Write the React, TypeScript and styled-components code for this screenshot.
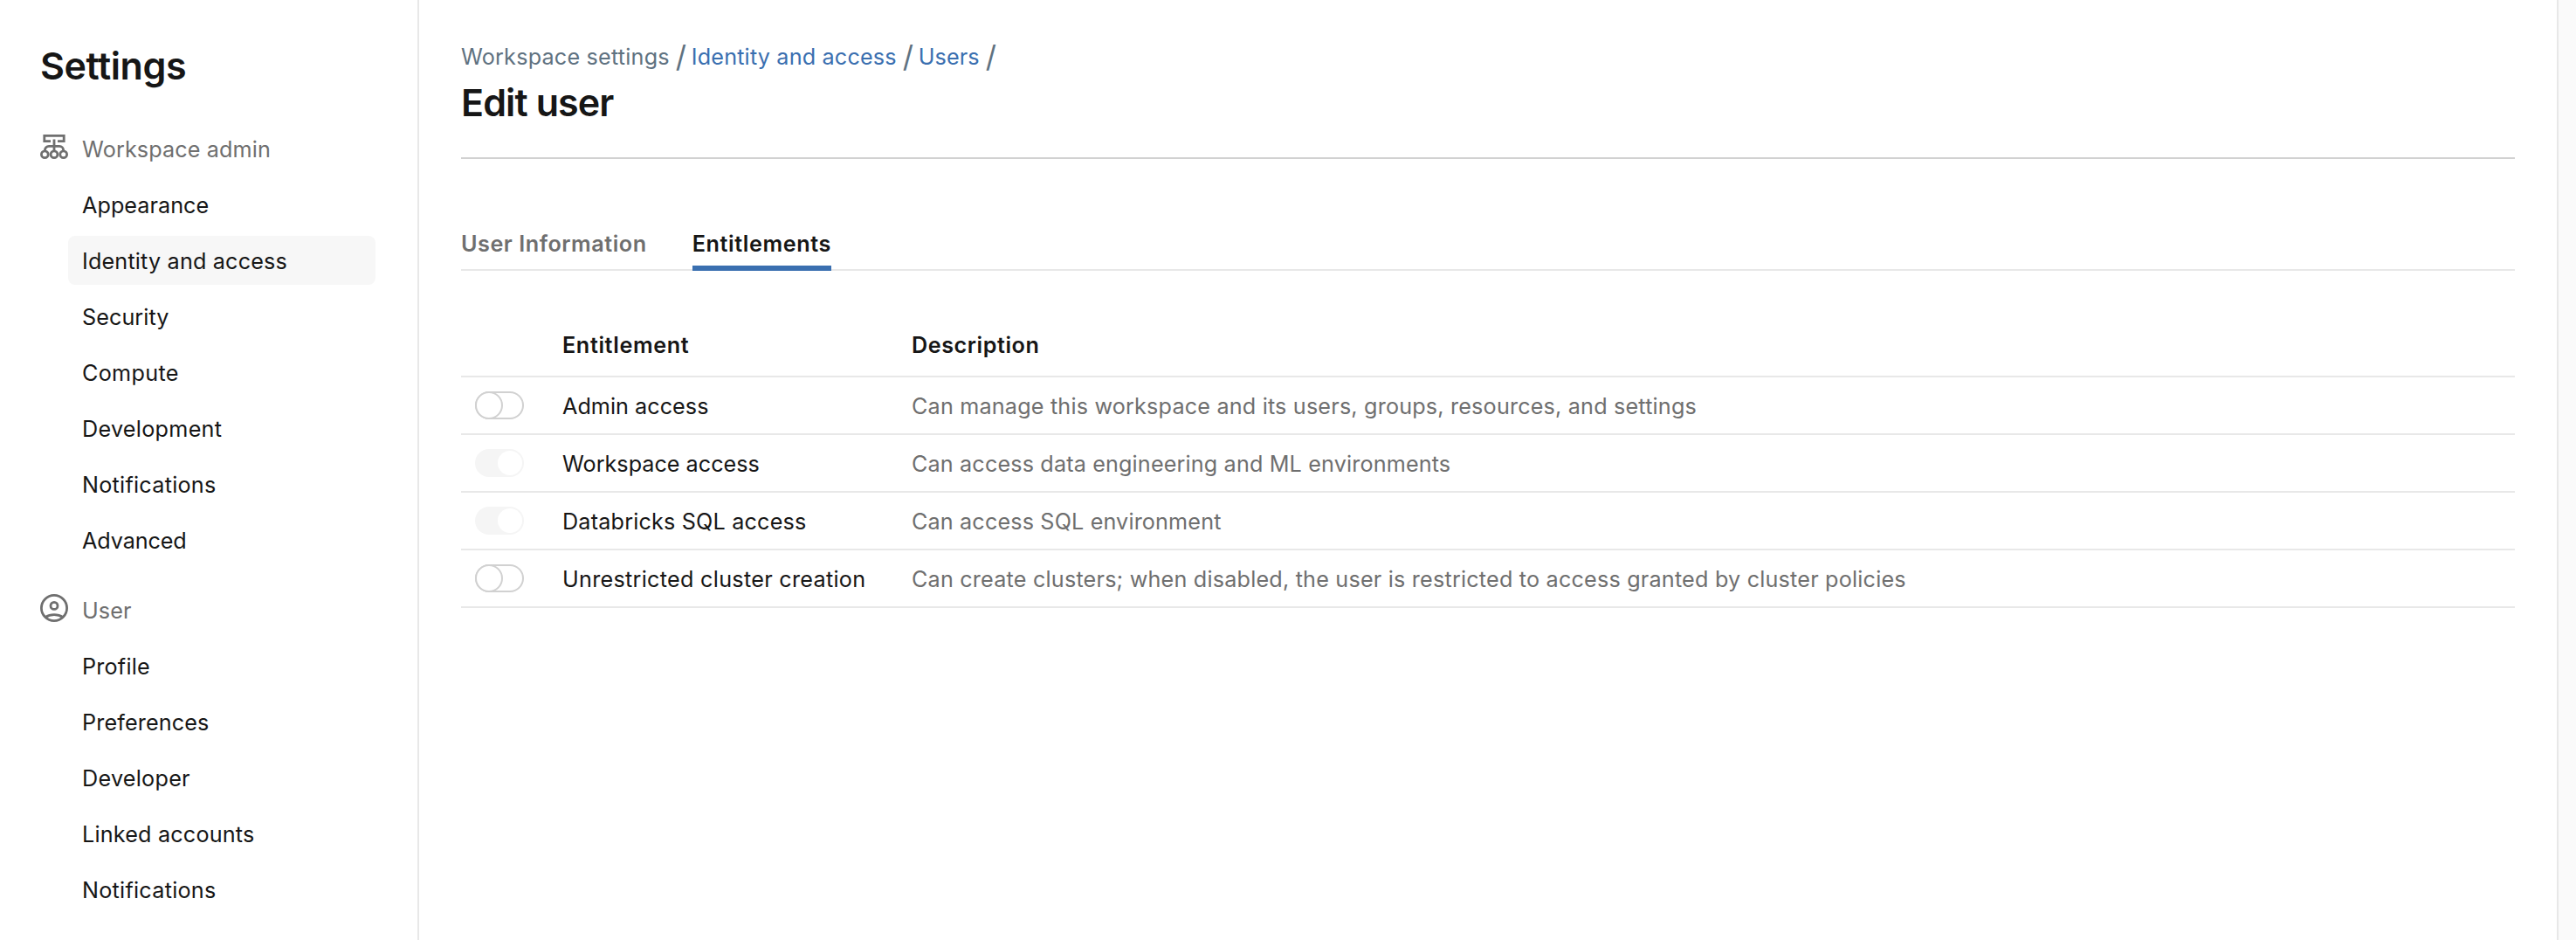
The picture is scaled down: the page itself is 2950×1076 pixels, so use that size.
import React from "react";
import styled, { createGlobalStyle, css } from "styled-components";

const color = {
  text: "#161616",
  secondary: "#6f6f6f",
  crumb: "#5f7281",
  link: "#3a6fb0",
  border: "#e8e8e8",
  divider: "#d1d1d1",
  selected: "#f7f7f7",
};

const GlobalStyle = createGlobalStyle`
  *, *::before, *::after { box-sizing: border-box; }
  body {
    margin: 0;
    background: #fafafa;
    color: ${color.text};
    font-family: Inter, "Liberation Sans", sans-serif;
    font-size: 25.2px;
    line-height: 40px;
    overflow: hidden;
  }
`;

const Page = styled.div`
  display: flex;
  width: 2930px;
  height: 1076px;
  background: #fff;
  border-right: 2px solid ${color.border};
`;

const Sidebar = styled.aside`
  flex: none;
  width: 480px;
  padding: 53px 48px 0 46px;
  border-right: 2px solid ${color.border};
`;

const Text = styled.span<{ $track?: number }>`
  display: block;
  padding-top: 2px;
  white-space: nowrap;
  letter-spacing: ${(p) => p.$track ?? 0}px;
`;

const heading = css`
  margin: 0;
  font-size: 43px;
  font-weight: 600;
  line-height: 44px;
  white-space: nowrap;
`;

const SidebarTitle = styled.h2`
  ${heading}
  letter-spacing: -0.41px;
`;

const NavSection = styled.section`
  margin-top: 45px;

  & + & {
    margin-top: 24px;
  }
`;

const SectionHeader = styled.div`
  display: flex;
  height: 56px;
  gap: 16px;
  align-items: center;
  color: ${color.secondary};

  svg {
    flex: none;
    margin-bottom: 4px;
  }
`;

const NavList = styled.nav`
  display: flex;
  flex-direction: column;
  gap: 8px;
  margin: 8px 0 0 32px;
`;

const NavItem = styled.a<{ $active?: boolean }>`
  display: flex;
  align-items: center;
  height: 56px;
  padding: 0 16px;
  border-radius: 8px;
  background: ${(p) => (p.$active ? color.selected : "transparent")};
`;

const Main = styled.main`
  flex: 1;
  padding: 44px 48px 0;
`;

const Breadcrumbs = styled.div`
  display: flex;
  height: 40px;
  align-items: center;
  color: ${color.crumb};
`;

const Crumb = styled(Text)<{ $link?: boolean }>`
  color: ${(p) => (p.$link ? color.link : color.crumb)};
`;

const Slash = styled.span`
  width: 12px;
  margin: 0 6px 0 7px;
  padding-top: 2px;
  font-size: 34px;
  line-height: 40px;
`;

const PageTitle = styled.h1`
  ${heading}
  margin-top: 11px;
  letter-spacing: -0.9px;
`;

const TabStrip = styled.div`
  display: flex;
  gap: 52px;
  height: 130px;
  margin-top: 41px;
  padding-top: 75px;
  border-top: 2px solid ${color.divider};
  border-bottom: 2px solid ${color.border};
`;

const Tab = styled.div<{ $active?: boolean }>`
  height: 53px;
  border-bottom: 6px solid ${(p) => (p.$active ? color.link : "transparent")};
  color: ${(p) => (p.$active ? color.text : color.secondary)};
  font-weight: 600;
`;

const Table = styled.div`
  margin-top: 56px;
`;

const Row = styled.div`
  display: grid;
  grid-template-columns: 116px 400px 1fr;
  align-items: center;
  height: 66px;
  border-bottom: 2px solid ${color.border};
`;

const HeaderRow = styled(Row)`
  align-items: start;
  padding-top: 7px;
  font-weight: 600;
`;

const Description = styled(Text)`
  color: ${color.secondary};
`;

const Switch = styled.div<{ $on?: boolean }>`
  display: flex;
  align-items: center;
  width: 56px;
  height: 32px;
  margin-left: 16px;
  border-radius: 16px;
  ${(p) =>
    p.$on
      ? css`
          justify-content: flex-end;
          padding-right: 2px;
          background: #f5f5f5;
        `
      : css`
          box-shadow: inset 0 0 0 2px ${color.divider};
        `}
`;

const Knob = styled.div<{ $on?: boolean }>`
  width: ${(p) => (p.$on ? 28 : 32)}px;
  height: ${(p) => (p.$on ? 28 : 32)}px;
  border: ${(p) => (p.$on ? "none" : `2px solid ${color.divider}`)};
  border-radius: 50%;
  background: #fff;
`;

const WorkspaceIcon = () => (
  <svg width="32" height="32" viewBox="0 0 32 32" fill="none" stroke="currentColor" strokeWidth="2.8">
    <path d="M12 9.6H4.8V3.4H27.2V9.6H20" />
    <path d="M16 7.5V20M5.4 20.5V20a4.6 4.6 0 0 1 4.6-4.6H22A4.6 4.6 0 0 1 26.6 20v.5" />
    <circle cx="5.3" cy="24.7" r="3.9" />
    <circle cx="16" cy="24.7" r="3.9" />
    <circle cx="26.7" cy="24.7" r="3.9" />
  </svg>
);

const UserIcon = () => (
  <svg width="32" height="32" viewBox="0 0 32 32" fill="none" stroke="currentColor" strokeWidth="2.8">
    <circle cx="16" cy="16" r="14.6" />
    <circle cx="16" cy="13.4" r="4" />
    <path d="M5.8 26.6C8.6 24.7 12 23.6 16 23.6s7.4 1.1 10.2 3" />
  </svg>
);

type Label = { text: string; track: number; active?: boolean };

const adminItems: Label[] = [
  { text: "Appearance", track: 0.04 },
  { text: "Identity and access", track: 0.167, active: true },
  { text: "Security", track: 0.05 },
  { text: "Compute", track: 0.3 },
  { text: "Development", track: 0.28 },
  { text: "Notifications", track: 0.255 },
  { text: "Advanced", track: -0.1 },
];

const userItems: Label[] = [
  { text: "Profile", track: 0.2 },
  { text: "Preferences", track: 0.12 },
  { text: "Developer", track: 0.26 },
  { text: "Linked accounts", track: 0.18 },
  { text: "Notifications", track: 0.255 },
];

const entitlements = [
  {
    name: "Admin access",
    nameTrack: 0.03,
    description: "Can manage this workspace and its users, groups, resources, and settings",
    track: 0.177,
    on: false,
  },
  {
    name: "Workspace access",
    nameTrack: 0,
    description: "Can access data engineering and ML environments",
    track: 0.14,
    on: true,
  },
  {
    name: "Databricks SQL access",
    nameTrack: 0.177,
    description: "Can access SQL environment",
    track: 0.14,
    on: true,
  },
  {
    name: "Unrestricted cluster creation",
    nameTrack: 0.28,
    description:
      "Can create clusters; when disabled, the user is restricted to access granted by cluster policies",
    track: 0.194,
    on: false,
  },
];

const NavGroup = ({ items }: { items: Label[] }) => (
  <NavList>
    {items.map((item) => (
      <NavItem key={item.text} $active={item.active}>
        <Text $track={item.track}>{item.text}</Text>
      </NavItem>
    ))}
  </NavList>
);

export default function App() {
  return (
    <>
      <GlobalStyle />
      <Page>
        <Sidebar>
          <SidebarTitle>Settings</SidebarTitle>
          <NavSection>
            <SectionHeader>
              <WorkspaceIcon />
              <Text $track={0.12}>Workspace admin</Text>
            </SectionHeader>
            <NavGroup items={adminItems} />
          </NavSection>
          <NavSection>
            <SectionHeader>
              <UserIcon />
              <Text $track={0.1}>User</Text>
            </SectionHeader>
            <NavGroup items={userItems} />
          </NavSection>
        </Sidebar>
        <Main>
          <Breadcrumbs>
            <Crumb $track={0.2}>Workspace settings</Crumb>
            <Slash>/</Slash>
            <Crumb $link $track={0.167}>Identity and access</Crumb>
            <Slash>/</Slash>
            <Crumb $link $track={0.1}>Users</Crumb>
            <Slash>/</Slash>
          </Breadcrumbs>
          <PageTitle>Edit user</PageTitle>
          <TabStrip>
            <Tab>
              <Text $track={0.53}>User Information</Text>
            </Tab>
            <Tab $active>
              <Text $track={0.6}>Entitlements</Text>
            </Tab>
          </TabStrip>
          <Table>
            <HeaderRow>
              <span />
              <Text $track={0.62}>Entitlement</Text>
              <Text $track={0.55}>Description</Text>
            </HeaderRow>
            {entitlements.map((e) => (
              <Row key={e.name}>
                <Switch $on={e.on}>
                  <Knob $on={e.on} />
                </Switch>
                <Text $track={e.nameTrack}>{e.name}</Text>
                <Description $track={e.track}>{e.description}</Description>
              </Row>
            ))}
          </Table>
        </Main>
      </Page>
    </>
  );
}
